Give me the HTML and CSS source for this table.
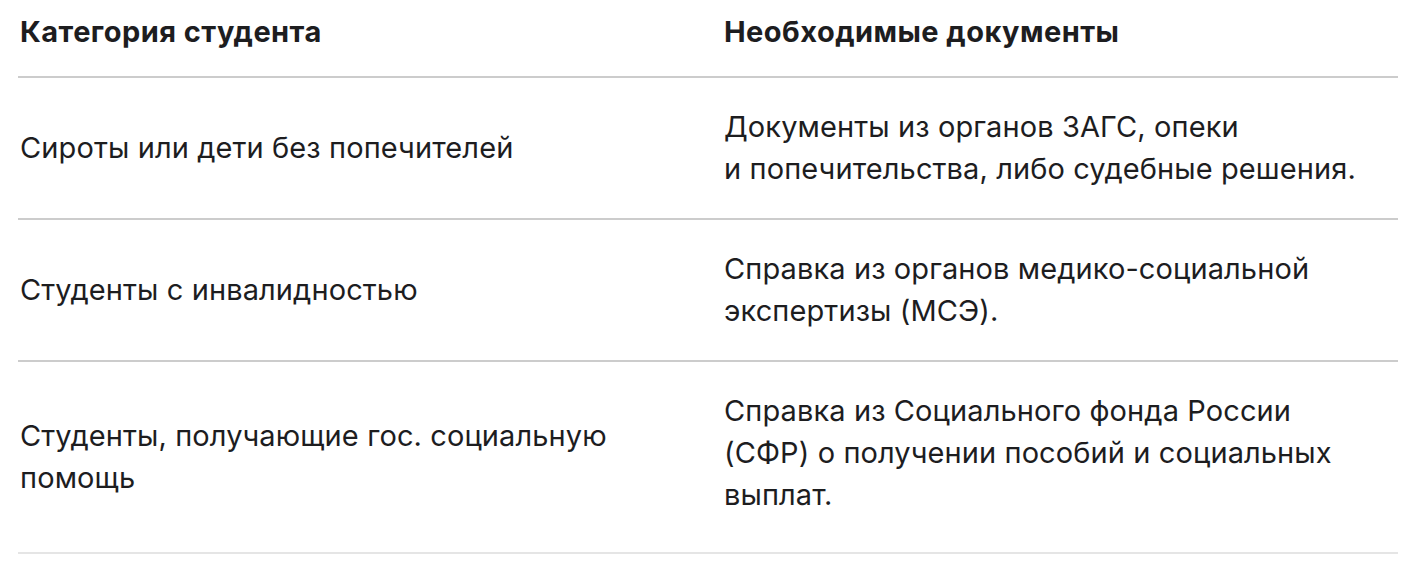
FILE: index.html
```html
<!DOCTYPE html>
<html lang="ru">
<head>
<meta charset="utf-8">
<title>Категории студентов</title>
<link rel="stylesheet" href="styles.css">
</head>
<body>
<div class="docs-table">
  <div class="row head">
    <div class="cell">Категория студента</div>
    <div class="cell">Необходимые документы</div>
  </div>
  <div class="row">
    <div class="cell">Сироты или дети без попечителей</div>
    <div class="cell">Документы из органов ЗАГС, опеки<br>и попечительства, либо судебные решения.</div>
  </div>
  <div class="row">
    <div class="cell">Студенты с инвалидностью</div>
    <div class="cell">Справка из органов медико-социальной<br>экспертизы (МСЭ).</div>
  </div>
  <div class="row last">
    <div class="cell">Студенты, получающие гос. социальную<br>помощь</div>
    <div class="cell extra">Справка из Социального фонда России<br>(СФР) о получении пособий и социальных<br>выплат.</div>
  </div>
</div>
</body>
</html>
```
FILE: styles.css
```css
html, body {
  margin: 0;
  padding: 0;
  background: #ffffff;
}

body {
  font-family: Inter, "Noto Sans", "Liberation Sans", sans-serif;
  color: #1d1d1f;
  font-size: 29px;
  letter-spacing: 0.1px;
  line-height: 42px;
}

.docs-table {
  margin: 0 26px 0 18px;
}

.row {
  display: grid;
  grid-template-columns: 1fr 1fr;
  column-gap: 32px;
  align-items: center;
  padding: 28px 0;
  border-bottom: 2px solid #cccccc;
}

.row .cell:first-child {
  padding-left: 2px;
}

.row.head {
  padding: 11px 0 23px;
  font-weight: 700;
  letter-spacing: 0.45px;
}

.row.last {
  border-bottom-color: #e5e5e5;
}

.cell.extra {
  padding-bottom: 8px;
}
```
